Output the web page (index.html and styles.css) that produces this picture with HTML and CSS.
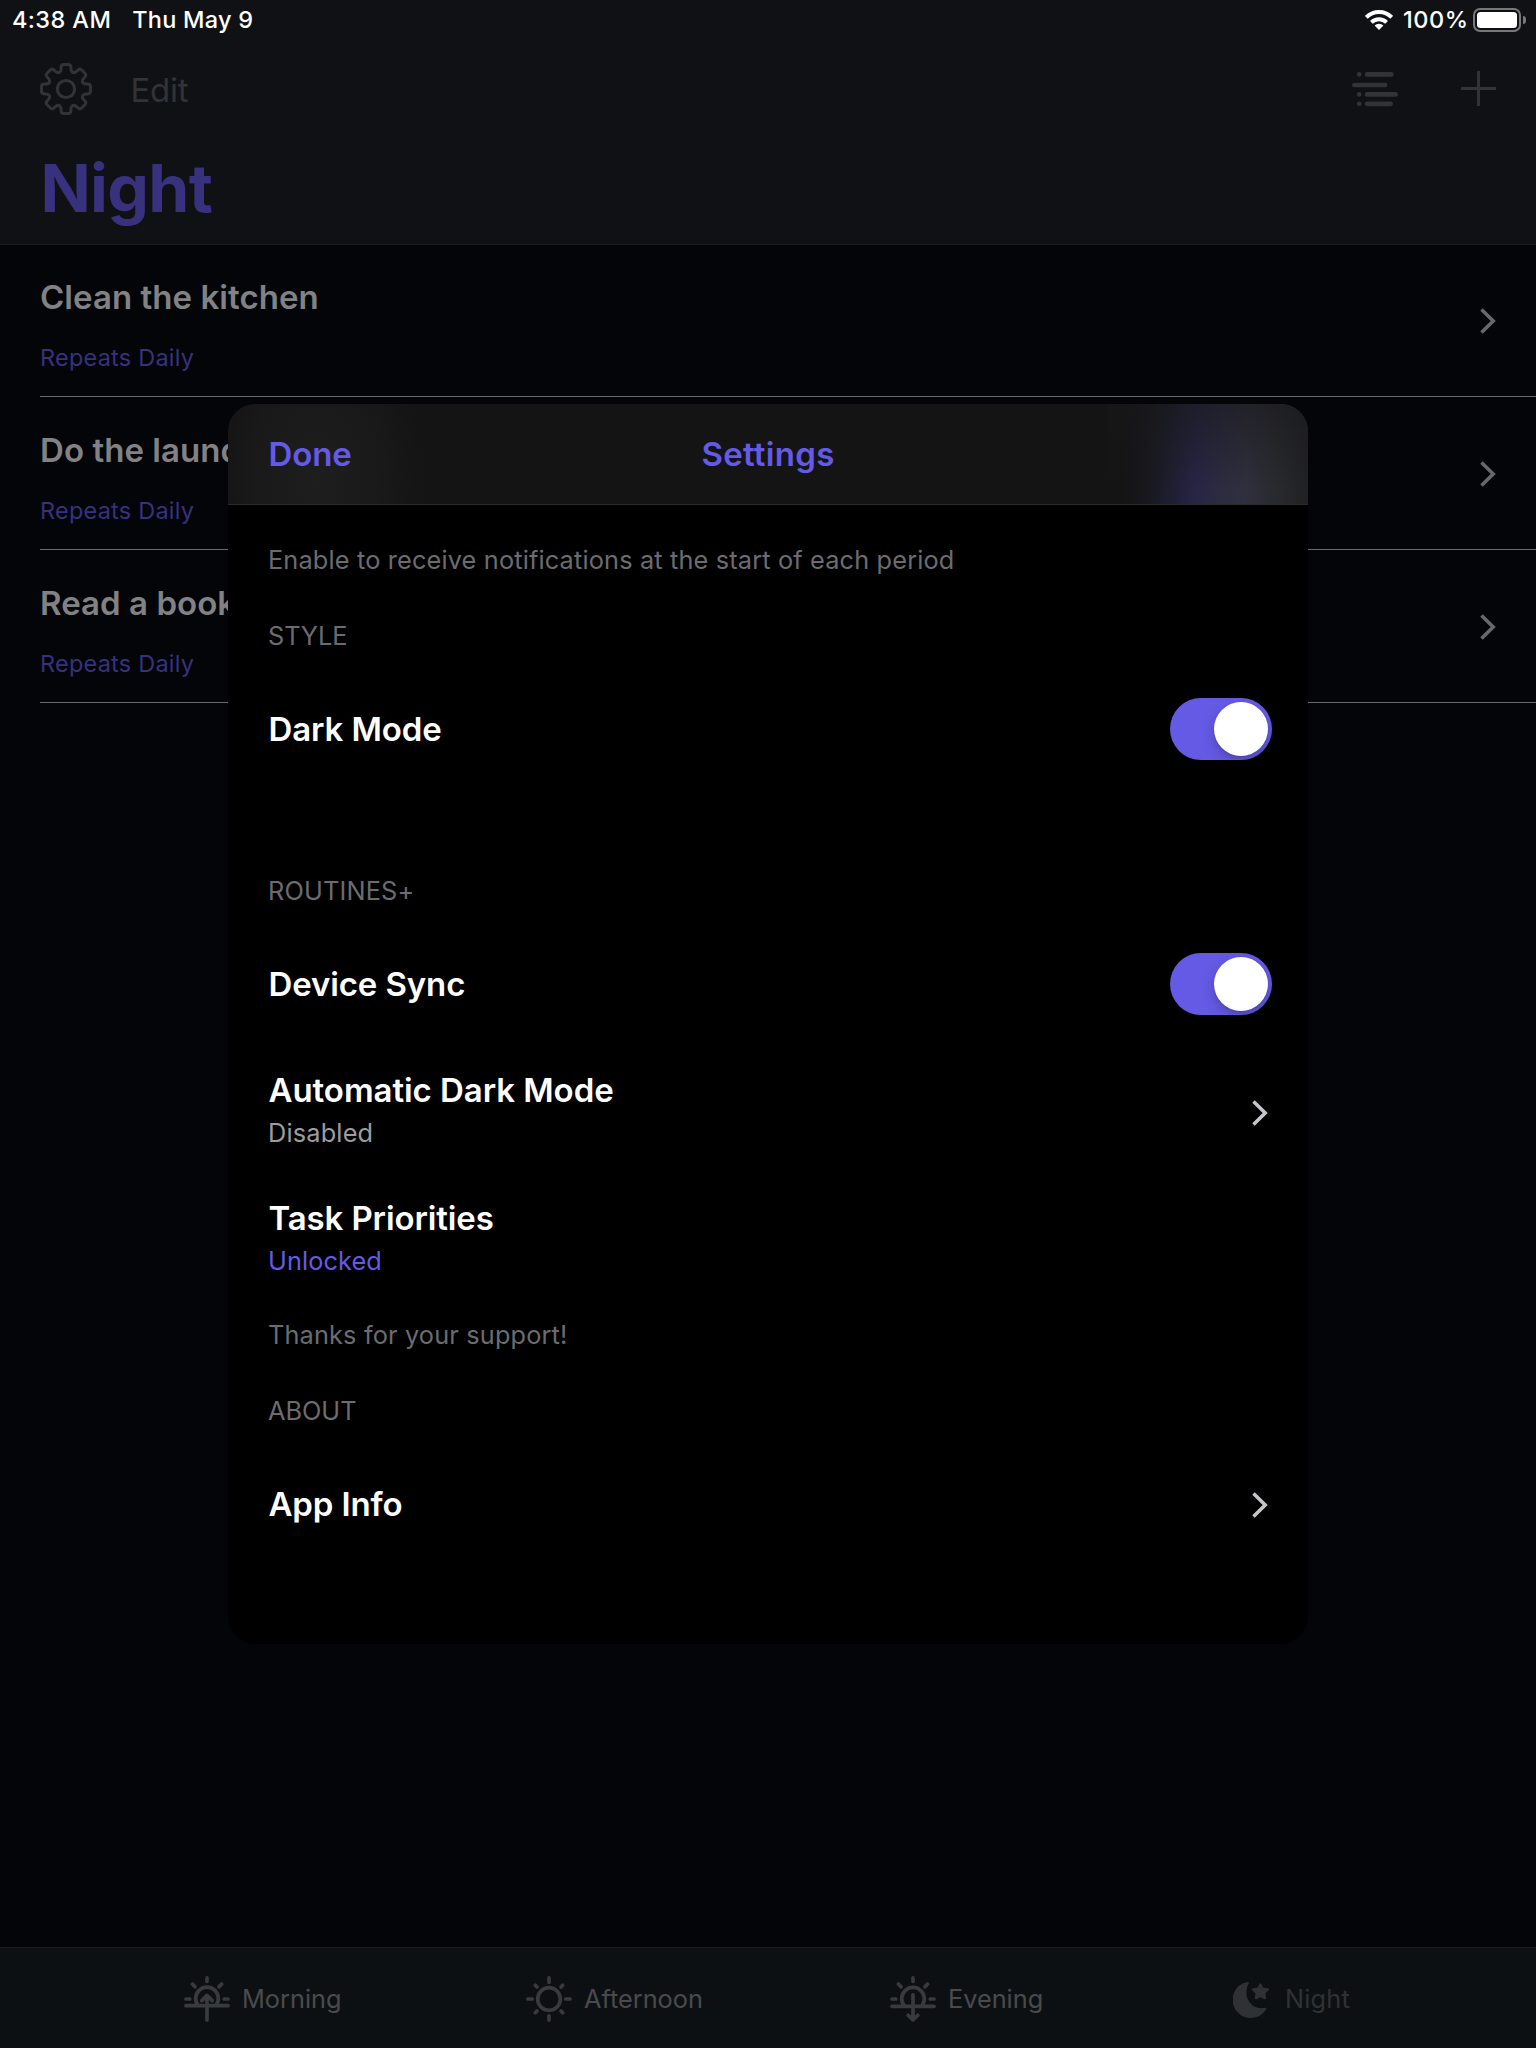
FILE: index.html
```
<!DOCTYPE html>
<html lang="en">
<head>
<meta charset="utf-8">
<title>Routines – Settings</title>
<link rel="stylesheet" href="styles.css">
</head>
<body>
<svg width="0" height="0" class="defs" aria-hidden="true">
  <symbol id="chevron" viewBox="0 0 16 26"><path d="M1.5 1.5 13.2 13 1.5 24.5" fill="none" stroke="currentColor" stroke-width="3.6"/></symbol>
  <path id="tooth" d="M-6.9-16.6C-5.2-17.3-4.9-18.6-4.9-20.5V-21.5C-4.9-23.6-4-24.5-2.3-24.5H2.3C4-24.5 4.9-23.6 4.9-21.5V-20.5C4.9-18.6 5.2-17.3 6.9-16.6"/>
</svg>

<div class="screen">
  <header class="top">
    <div class="status">
      <span class="time">4:38 AM</span>
      <span class="date">Thu May 9</span>
      <svg class="wifi" width="28" height="20" viewBox="0 0 28 20">
        <g fill="none" stroke="currentColor" stroke-width="3.9"><path d="M1.3 7.3A18 18 0 0 1 26.7 7.3"/><path d="M6.4 12.4A10.8 10.8 0 0 1 21.6 12.4"/></g>
        <path d="M14 20 9.6 15.6A6.3 6.3 0 0 1 18.4 15.6Z" fill="currentColor"/>
      </svg>
      <span class="percent">100%</span>
      <span class="battery"><span class="charge"></span></span><span class="nub"></span>
    </div>
    <nav class="nav">
      <svg class="gear" width="52" height="52" viewBox="-26 -26 52 52">
        <g fill="none" stroke="currentColor" stroke-width="3" stroke-linecap="round">
          <circle r="8.6"/>
          <use href="#tooth"/><use href="#tooth" transform="rotate(45)"/><use href="#tooth" transform="rotate(90)"/><use href="#tooth" transform="rotate(135)"/>
          <use href="#tooth" transform="rotate(180)"/><use href="#tooth" transform="rotate(225)"/><use href="#tooth" transform="rotate(270)"/><use href="#tooth" transform="rotate(315)"/>
        </g>
      </svg>
      <span class="edit">Edit</span>
      <svg class="tasks" width="46" height="36" viewBox="0 0 46 36">
        <g stroke="currentColor" stroke-width="4.7" stroke-linecap="round">
          <path d="M15.1 3.4H39.4M2.4 14H33M15.1 23.4H43.6M15.1 32.8H38.6"/>
        </g>
        <g fill="currentColor"><circle cx="7.2" cy="3.4" r="2.3"/><circle cx="7.2" cy="23.4" r="2.3"/><circle cx="7.2" cy="32.8" r="2.3"/></g>
      </svg>
      <svg class="plus" width="35" height="35" viewBox="0 0 35 35"><path d="M17.5 0V35M0 17.5H35" stroke="currentColor" stroke-width="3"/></svg>
    </nav>
    <h1 class="title">Night</h1>
  </header>

  <ul class="tasklist">
    <li class="task"><div><div class="name">Clean the kitchen</div><div class="repeat">Repeats Daily</div></div><svg class="chev" width="16" height="26"><use href="#chevron"/></svg></li>
    <li class="task"><div><div class="name">Do the laundry</div><div class="repeat">Repeats Daily</div></div><svg class="chev" width="16" height="26"><use href="#chevron"/></svg></li>
    <li class="task"><div><div class="name">Read a book</div><div class="repeat">Repeats Daily</div></div><svg class="chev" width="16" height="26"><use href="#chevron"/></svg></li>
  </ul>

  <nav class="tabs">
    <div class="tab">
      <svg width="46" height="46" viewBox="0 0 46 46"><g fill="none" stroke="currentColor" stroke-width="3.7" stroke-linecap="round" stroke-linejoin="round">
        <path d="M23 1.9V5.4M2 23H5.8M40.2 23H44M8.4 8 11 10.8M37.6 8 35 10.8M2 29.7H44"/>
        <path d="M13.9 29.2A11.3 11.3 0 1 1 32.1 29.2"/>
        <path d="M23 19.5V44.1M17.8 24.6 23 19.4 28.2 24.6"/></g></svg>
      <span>Morning</span>
    </div>
    <div class="tab">
      <svg width="46" height="46" viewBox="0 0 46 46"><g fill="none" stroke="currentColor" stroke-width="3.7" stroke-linecap="round">
        <circle cx="23" cy="23" r="11.3"/>
        <path d="M23 1.9V6.2M23 39.8V44.1M1.9 23H6.2M39.8 23H44.1M9.3 9.3 11 11M35 11 36.7 9.3M9.3 36.7 11 35M35 35 36.7 36.7"/></g></svg>
      <span>Afternoon</span>
    </div>
    <div class="tab">
      <svg width="46" height="46" viewBox="0 0 46 46"><g fill="none" stroke="currentColor" stroke-width="3.7" stroke-linecap="round" stroke-linejoin="round">
        <path d="M23 1.9V5.4M2 23H5.8M40.2 23H44M8.4 8 11 10.8M37.6 8 35 10.8M2 30.3H44"/>
        <path d="M13.9 29.4A11.3 11.3 0 1 1 32.1 29.4"/>
        <path d="M23 18.8V43.8M18.2 39.2 23 44 27.8 39.2"/></g></svg>
      <span>Evening</span>
    </div>
    <div class="tab current">
      <svg width="40" height="46" viewBox="0 0 40 46"><g fill="currentColor" stroke="currentColor" stroke-width="2" stroke-linejoin="round">
        <path d="M14.8 7A17.1 17.1 0 1 0 32.3 32.8C21 35.5 12 26.5 12.3 16C12.4 12.5 13.3 9.5 14.8 7Z"/>
        <path d="M27.4 8.3 29.7 12.6 35 13.5 31.3 17 32 22.3 27.4 20 22.8 22.3 23.5 17 19.8 13.5 25.1 12.6Z"/></g></svg>
      <span class="night">Night</span>
    </div>
  </nav>

  <section class="sheet">
    <header class="bar"><span class="done">Done</span><span class="heading">Settings</span><span></span></header>
    <div class="content">
      <p class="note">Enable to receive notifications at the start of each period</p>
      <h2 class="group style">STYLE</h2>
      <div class="row switchrow"><span class="label">Dark Mode</span><span class="switch"><span class="knob"></span></span></div>
      <h2 class="group routines">ROUTINES+</h2>
      <div class="row switchrow"><span class="label">Device Sync</span><span class="switch"><span class="knob"></span></span></div>
      <div class="row"><div class="stack"><div class="label automatic">Automatic Dark Mode</div><div class="detail">Disabled</div></div><svg class="chev" width="16" height="26"><use href="#chevron"/></svg></div>
      <div class="row"><div class="stack"><div class="label">Task Priorities</div><div class="detail unlocked">Unlocked</div></div></div>
      <p class="note">Thanks for your support!</p>
      <h2 class="group about">ABOUT</h2>
      <div class="row"><span class="label info">App Info</span><svg class="chev" width="16" height="26"><use href="#chevron"/></svg></div>
    </div>
  </section>
</div>
</body>
</html>
```
FILE: styles.css
```
* { box-sizing: border-box; margin: 0; padding: 0; }

body {
  background: #040509;
  font-family: Inter, "Liberation Sans", sans-serif;
}

.defs { position: absolute; }
svg { display: block; flex: none; }

.screen {
  position: relative;
  width: 1536px;
  height: 2048px;
  overflow: hidden;
  display: flex;
  flex-direction: column;
  background: #040509;
}

/* Top area */
.top {
  height: 245px;
  background: #101114;
  border-bottom: 1px solid #1a1b1e;
}

.status {
  height: 40px;
  padding: 0 10px 0 12px;
  display: flex;
  align-items: center;
  color: #fff;
  font-size: 23.5px;
  font-weight: 500;
  line-height: 39px;
}
.time { letter-spacing: 0.4px; }
.date { margin-left: 21px; letter-spacing: 0.24px; }
.status .time, .status .date, .percent { height: 40px; white-space: nowrap; }
.wifi { margin-left: auto; }
.percent { margin-left: 10px; letter-spacing: 0.5px; }
.battery {
  width: 48px;
  height: 24px;
  margin-left: 4.5px;
  border: 2px solid #77787a;
  border-radius: 7px;
  padding: 2px;
}
.charge { display: block; height: 16px; border-radius: 3.5px; background: #fff; }
.nub {
  width: 3px;
  height: 8px;
  margin-left: 2px;
  border-radius: 0 3px 3px 0;
  background: #77787a;
}

.nav {
  height: 100px;
  padding: 0 40px;
  display: flex;
  align-items: center;
  color: #323336;
}
.gear { margin-top: -2px; }
.edit { margin-left: 38.5px; font-size: 33px; line-height: 100px; letter-spacing: -0.3px; }
.tasks { margin-left: auto; margin-top: -2px; }
.plus { margin-left: 63px; margin-top: -3px; }

.title {
  padding-left: 40.5px;
  font-size: 66px;
  line-height: 96px;
  font-weight: 700;
  letter-spacing: -0.7px;
  color: #37317e;
}

/* Tasks */
.tasklist { list-style: none; margin: -1px 0 0 40px; flex: 1; }
.task {
  height: 153px;
  padding: 32px 40px 0 0;
  display: flex;
  justify-content: space-between;
  border-bottom: 1px solid #69696d;
}
.name { font-size: 33px; line-height: 42px; font-weight: 600; letter-spacing: 0.05px; color: #828284; }
.repeat { margin-top: 25px; font-size: 23.5px; line-height: 30px; letter-spacing: 0.22px; color: #37317e; }
.task .chev { margin-top: 32px; color: #67686b; }

/* Tab bar */
.tabs {
  height: 101px;
  padding-left: 184px;
  display: grid;
  grid-template-columns: 342px 364px 343px auto;
  align-items: center;
  background: #0d1013;
  border-top: 1px solid #191b1e;
}
.tab { display: flex; align-items: center; gap: 12px; margin-top: 2px; color: #3a3a3d; font-size: 25.3px; line-height: 46px; }
.tab span { color: #4a4a4d; }
.tab.current, .tab .night { color: #303134; }
.night { letter-spacing: 0.2px; }

/* Settings sheet floats over the task list */
.sheet {
  position: absolute;
  left: 228px;
  top: 404px;
  width: 1080px;
  height: 1240px;
  border-radius: 27px;
  overflow: hidden;
  background: #000;
}
.bar {
  height: 101px;
  padding: 0 40px;
  display: grid;
  grid-template-columns: 1fr auto 1fr;
  border-bottom: 1px solid #2a2a2b;
  background:
    linear-gradient(180deg, rgba(24, 24, 26, 0.6), rgba(24, 24, 26, 0) 85%) 100% 0 / 200px 100% no-repeat,
    linear-gradient(92deg, rgba(20, 20, 20, 0) 895px, #17171d 920px, #1e1e30 944px, #272445 968px, #2d2b41 995px, #302f3d 1020px, #28292d 1055px, #212123 1080px),
    radial-gradient(ellipse 105px 170px at 90px 75px, #1e1e1e 0%, #191919 60%, rgba(20, 20, 20, 0) 100%),
    #141414;
  color: #655ae6;
  font-size: 33px;
  font-weight: 600;
  line-height: 100px;
}
.done { padding-left: 0.5px; letter-spacing: -0.1px; }
.heading { letter-spacing: 0.3px; }

.content { padding: 25px 40px 0; }
.note { padding: 10px 0 26px; font-size: 25.3px; line-height: 40px; letter-spacing: 0.16px; color: #6c6c70; }
.group { font-size: 25.3px; line-height: 60px; font-weight: 400; color: #6c6c70; }
.style { letter-spacing: -0.1px; }
.routines { margin-top: 67px; letter-spacing: 0.18px; }
.about { letter-spacing: 0; }

.row { height: 128px; display: flex; align-items: center; justify-content: space-between; }
.switchrow { padding-bottom: 2px; }
.label { padding-left: 0.5px; font-size: 33px; line-height: 42px; font-weight: 600; letter-spacing: -0.12px; color: #fff; }
.automatic { letter-spacing: -0.06px; }
.info { margin-top: -2px; letter-spacing: -0.14px; }
.stack { align-self: flex-start; padding-top: 20px; }
.detail { margin-top: 1px; font-size: 25.3px; line-height: 42px; letter-spacing: 0.18px; color: #9d9d9f; }
.unlocked { letter-spacing: 0.1px; color: #655ae6; }
.row .chev { color: #c7c7cb; }

.switch {
  width: 102px;
  height: 62px;
  margin-right: -4px;
  padding: 4px;
  display: flex;
  justify-content: flex-end;
  border-radius: 31px;
  background: #655ae6;
  overflow: hidden;
}
.knob {
  width: 54px;
  height: 54px;
  border-radius: 50%;
  background: #fff;
  box-shadow: 0 5px 14px rgba(0, 0, 0, 0.22), 0 2px 2px rgba(0, 0, 0, 0.08);
}
```
